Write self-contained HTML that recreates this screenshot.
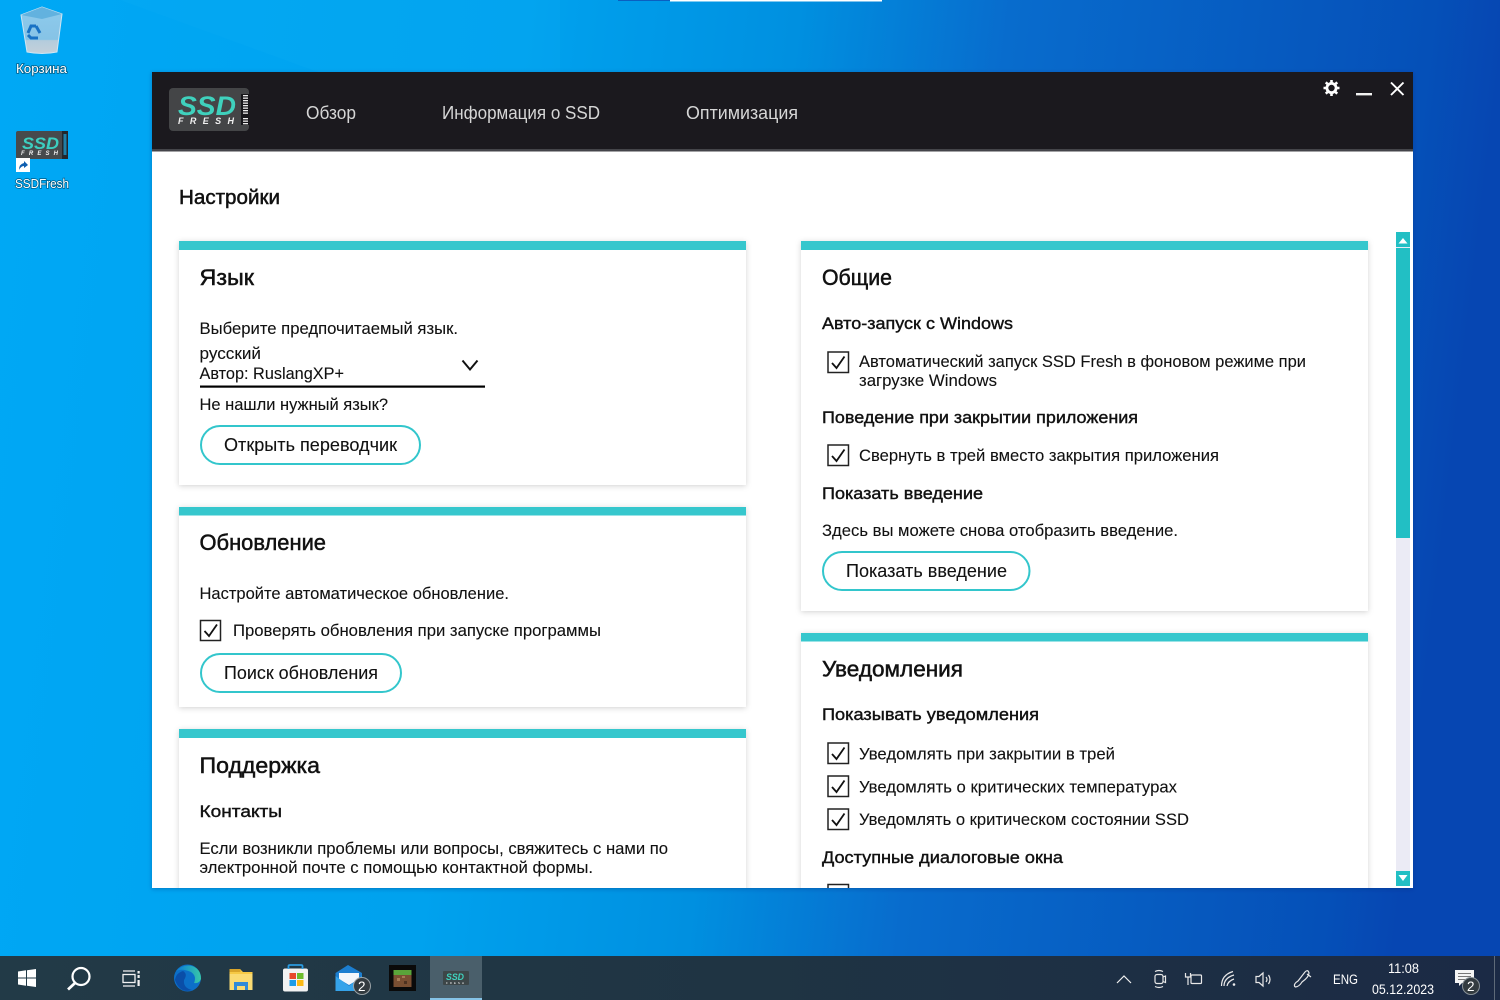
<!DOCTYPE html>
<html lang="ru"><head><meta charset="utf-8"><title>SSD Fresh</title>
<style>
html,body{margin:0;padding:0;width:1500px;height:1000px;overflow:hidden;background:#0a7fdc}
svg{position:absolute;left:0;top:0;display:block}
text{font-family:"Liberation Sans",sans-serif;white-space:pre}
.b{fill:#111;font-size:16.5px;stroke:#111;stroke-width:.1px}
.m{fill:#111;font-size:17px;stroke:#111;stroke-width:.4px}
.h{fill:#111;font-size:22px;stroke:#111;stroke-width:.5px}
.n{fill:#d6d6d6;font-size:18px}
.t{fill:#fff;font-size:13.5px}
.d{fill:#fff;font-size:13px;paint-order:stroke;stroke:rgba(0,0,0,.45);stroke-width:1.5px}
</style></head>
<body>
<svg width="1500" height="1000" viewBox="0 0 1500 1000">
<defs>
<linearGradient id="bg" x1="0" y1="0" x2="1" y2="0.08">
<stop offset="0" stop-color="#00a8f5"/><stop offset=".35" stop-color="#00a2ee"/><stop offset=".53" stop-color="#0090e0"/><stop offset=".67" stop-color="#086ccd"/><stop offset=".95" stop-color="#0550b8"/><stop offset="1" stop-color="#0646b2"/>
</linearGradient>
<linearGradient id="tb" x1="0" x2="1"><stop offset="0" stop-color="#223a47"/><stop offset=".5" stop-color="#1f3443"/><stop offset="1" stop-color="#1b2a45"/></linearGradient>
<linearGradient id="bin" x1="0" y1="0" x2="0" y2="1"><stop offset="0" stop-color="#8ecbec"/><stop offset=".7" stop-color="#86c3e6"/><stop offset=".72" stop-color="#b4ccdc"/><stop offset="1" stop-color="#c4d0da"/></linearGradient>
<linearGradient id="edge" x1="0" x2="1"><stop offset="0" stop-color="#0a7bd8"/><stop offset="1" stop-color="#38c8a8"/></linearGradient>
<filter id="sh" x="-5%" y="-5%" width="110%" height="110%"><feDropShadow dx="0" dy="1" stdDeviation="3" flood-color="#000" flood-opacity=".18"/></filter>
<filter id="wsh" x="-3%" y="-3%" width="106%" height="106%"><feDropShadow dx="0" dy="1" stdDeviation="2" flood-color="#002a70" flood-opacity=".35"/></filter>
<clipPath id="win"><rect x="152" y="72" width="1261" height="816"/></clipPath>
</defs>

<!-- desktop -->
<rect width="1500" height="1000" fill="url(#bg)"/>
<polygon points="120,0 560,0 560,160" fill="#18b4fa" opacity=".12"/>
<rect x="670" y="0" width="212" height="1.5" fill="#fff"/>
<rect x="618" y="0" width="52" height="1" fill="#0a5fc0"/>

<!-- recycle bin -->
<path d="M21 15 L42 7 L62 14 L57 52 Q42 55 27 52 Z" fill="url(#bin)" stroke="#cfe6f4" stroke-width="1"/>
<path d="M21 15 L42 19 L62 14 L42 7 Z" fill="#5aaedd" opacity=".85"/>
<g fill="none" stroke="#1872c4" stroke-width="3">
<path d="M28 33 L31 26 L36 26"/><path d="M36 26 L40 33"/><path d="M38 38 L31 38 L28 35"/>
</g>
<text class="d" x="16" y="73" textLength="51" lengthAdjust="spacingAndGlyphs">Корзина</text>

<!-- desktop ssd icon -->
<rect x="16" y="131" width="52" height="28" rx="2" fill="#474a4c"/>
<rect x="62" y="131" width="6" height="28" fill="#23262a"/>
<rect x="63.5" y="134" width="3" height="21" fill="#1f7fa8"/>
<text x="22" y="149" font-size="17" font-weight="bold" font-style="italic" fill="#3ccfc0" textLength="37" lengthAdjust="spacingAndGlyphs">SSD</text>
<text x="21" y="155" font-size="6" font-weight="bold" font-style="italic" fill="#eee" textLength="37" lengthAdjust="spacing">FRESH</text>
<rect x="16" y="158" width="14" height="14" fill="#fff"/>
<path d="M19 170 Q19 164 24 163 L24 161 L28 165 L24 168 L24 166 Q21 166 19 170Z" fill="#0f5fb0"/>
<text class="d" x="15" y="188" textLength="54" lengthAdjust="spacingAndGlyphs">SSDFresh</text>

<!-- window -->
<rect x="152" y="72" width="1261" height="816" fill="#fff" filter="url(#wsh)"/>
<rect x="152" y="72" width="1261" height="77" fill="#1b191e"/>
<rect x="152" y="149" width="1261" height="2.5" fill="#45454a"/>

<!-- logo -->
<rect x="169" y="88" width="80" height="43" rx="4" fill="#444547"/>
<rect x="241" y="94" width="8" height="31" fill="#17161a"/>
<g fill="#ececec"><rect x="243" y="95" width="5" height="1.3"/><rect x="243" y="97.5" width="5" height="1.3"/><rect x="243" y="100" width="5" height="1.3"/><rect x="243" y="102.5" width="5" height="1.3"/><rect x="243" y="105" width="5" height="1.3"/><rect x="243" y="107.500" width="5" height="1.3"/><rect x="243" y="110" width="5" height="1.3"/><rect x="243" y="112.5" width="5" height="1.3"/><rect x="243" y="118" width="5" height="1.3"/><rect x="243" y="120.500" width="5" height="1.3"/><rect x="243" y="123" width="5" height="1.3"/></g>
<text x="178" y="115" font-size="27" font-weight="bold" font-style="italic" fill="#3fd1bd" textLength="58" lengthAdjust="spacingAndGlyphs">SSD</text>
<text x="178" y="124" font-size="9" font-weight="bold" font-style="italic" fill="#f0f0f0" textLength="56" lengthAdjust="spacing">FRESH</text>

<!-- nav -->
<text class="n" x="306" y="119" textLength="50" lengthAdjust="spacingAndGlyphs">Обзор</text>
<text class="n" x="442" y="119" textLength="158" lengthAdjust="spacingAndGlyphs">Информация о SSD</text>
<text class="n" x="686" y="119" textLength="112" lengthAdjust="spacingAndGlyphs">Оптимизация</text>

<!-- window controls -->
<g transform="translate(1331.500,88)" fill="none" stroke="#fff">
<circle r="4.6" stroke-width="2.8"/>
<g stroke-width="2.6"><path d="M0-8V-5.500M0 5.500V8M-8 0H-5.500M5.500 0H8M-5.700-5.700L-4-4M4 4L5.700 5.700M-5.700 5.700L-4 4M4-4L5.700-5.700"/></g>
</g>
<rect x="1356" y="93" width="16" height="2.4" fill="#f2f2f2"/>
<path d="M1391 82.500L1403.500 95M1403.500 82.500L1391 95" stroke="#fff" stroke-width="1.900" fill="none"/>

<text class="h" x="179" y="204" style="font-size:20px" textLength="101" lengthAdjust="spacingAndGlyphs">Настройки</text>

<g clip-path="url(#win)">
<!-- cards -->
<rect x="179" y="241" width="567" height="244" fill="#fff" filter="url(#sh)"/>
<rect x="179" y="507" width="567" height="200" fill="#fff" filter="url(#sh)"/>
<rect x="179" y="729" width="567" height="260" fill="#fff" filter="url(#sh)"/>
<rect x="801" y="241" width="567" height="370" fill="#fff" filter="url(#sh)"/>
<rect x="801" y="633" width="567" height="360" fill="#fff" filter="url(#sh)"/>
<g fill="#36c7cd">
<rect x="179" y="241" width="567" height="9"/>
<rect x="179" y="507" width="567" height="8.500"/>
<rect x="179" y="729" width="567" height="9"/>
<rect x="801" y="241" width="567" height="9"/>
<rect x="801" y="633" width="567" height="8.500"/>
</g>

<!-- Язык -->
<text class="h" x="199.500" y="285" textLength="54.500" lengthAdjust="spacingAndGlyphs">Язык</text>
<text class="b" x="199.500" y="334" textLength="258.500" lengthAdjust="spacingAndGlyphs">Выберите предпочитаемый язык.</text>
<text class="b" x="199.500" y="359" textLength="61.500" lengthAdjust="spacingAndGlyphs">русский</text>
<text class="b" x="199.500" y="379" textLength="144.500" lengthAdjust="spacingAndGlyphs">Автор: RuslangXP+</text>
<path d="M462.500 360.500L470 369.500L477.500 360.500" fill="none" stroke="#111" stroke-width="2"/>
<rect x="200" y="385.500" width="285" height="2.200" fill="#000"/>
<text class="b" x="199.500" y="410" textLength="188.500" lengthAdjust="spacingAndGlyphs">Не нашли нужный язык?</text>
<rect x="201" y="426" width="219" height="38" rx="19" fill="#fff" stroke="#33c6cc" stroke-width="2"/>
<text class="b" x="224" y="451" style="font-size:18px" textLength="173" lengthAdjust="spacingAndGlyphs">Открыть переводчик</text>

<!-- Обновление -->
<text class="h" x="199.500" y="550" textLength="126.500" lengthAdjust="spacingAndGlyphs">Обновление</text>
<text class="b" x="199.500" y="599" textLength="309.500" lengthAdjust="spacingAndGlyphs">Настройте автоматическое обновление.</text>
<rect x="200.500" y="620.500" width="20" height="20" fill="#fff" stroke="#222" stroke-width="1.500"/>
<path d="M204.500 631L209 636L217 624.500" fill="none" stroke="#111" stroke-width="1.800"/>
<text class="b" x="233" y="636" textLength="368" lengthAdjust="spacingAndGlyphs">Проверять обновления при запуске программы</text>
<rect x="201" y="654" width="200" height="38" rx="19" fill="#fff" stroke="#33c6cc" stroke-width="2"/>
<text class="b" x="224" y="679" style="font-size:18px" textLength="154" lengthAdjust="spacingAndGlyphs">Поиск обновления</text>

<!-- Поддержка -->
<text class="h" x="199.500" y="773" textLength="120.500" lengthAdjust="spacingAndGlyphs">Поддержка</text>
<text class="m" x="199.500" y="817" textLength="82.500" lengthAdjust="spacingAndGlyphs">Контакты</text>
<text class="b" x="199.500" y="854" textLength="468.500" lengthAdjust="spacingAndGlyphs">Если возникли проблемы или вопросы, свяжитесь с нами по</text>
<text class="b" x="199.500" y="873" textLength="393.500" lengthAdjust="spacingAndGlyphs">электронной почте с помощью контактной формы.</text>

<!-- Общие -->
<text class="h" x="822" y="285" textLength="70" lengthAdjust="spacingAndGlyphs">Общие</text>
<text class="m" x="822" y="329" textLength="191" lengthAdjust="spacingAndGlyphs">Авто-запуск с Windows</text>
<rect x="828" y="352" width="20.500" height="20.500" fill="#fff" stroke="#222" stroke-width="1.500"/>
<path d="M832 363L836.500 368L844.500 356.500" fill="none" stroke="#111" stroke-width="1.800"/>
<text class="b" x="859" y="367" textLength="447" lengthAdjust="spacingAndGlyphs">Автоматический запуск SSD Fresh в фоновом режиме при</text>
<text class="b" x="859" y="386" textLength="138" lengthAdjust="spacingAndGlyphs">загрузке Windows</text>
<text class="m" x="822" y="423" textLength="316" lengthAdjust="spacingAndGlyphs">Поведение при закрытии приложения</text>
<rect x="828" y="445" width="20.500" height="20.500" fill="#fff" stroke="#222" stroke-width="1.500"/>
<path d="M832 456L836.500 461L844.500 449.500" fill="none" stroke="#111" stroke-width="1.800"/>
<text class="b" x="859" y="461" textLength="360" lengthAdjust="spacingAndGlyphs">Свернуть в трей вместо закрытия приложения</text>
<text class="m" x="822" y="499" textLength="161" lengthAdjust="spacingAndGlyphs">Показать введение</text>
<text class="b" x="822" y="536" textLength="356" lengthAdjust="spacingAndGlyphs">Здесь вы можете снова отобразить введение.</text>
<rect x="823" y="552" width="206.500" height="38" rx="19" fill="#fff" stroke="#33c6cc" stroke-width="2"/>
<text class="b" x="846" y="577" style="font-size:18px" textLength="161" lengthAdjust="spacingAndGlyphs">Показать введение</text>

<!-- Уведомления -->
<text class="h" x="822" y="676.500" textLength="141" lengthAdjust="spacingAndGlyphs">Уведомления</text>
<text class="m" x="822" y="720" textLength="217" lengthAdjust="spacingAndGlyphs">Показывать уведомления</text>
<rect x="828" y="743" width="20.500" height="20.500" fill="#fff" stroke="#222" stroke-width="1.500"/>
<path d="M832 754L836.500 759L844.500 747.500" fill="none" stroke="#111" stroke-width="1.800"/>
<text class="b" x="859" y="759.500" textLength="256" lengthAdjust="spacingAndGlyphs">Уведомлять при закрытии в трей</text>
<rect x="828" y="776" width="20.500" height="20.500" fill="#fff" stroke="#222" stroke-width="1.500"/>
<path d="M832 787L836.500 792L844.500 780.500" fill="none" stroke="#111" stroke-width="1.800"/>
<text class="b" x="859" y="792.500" textLength="318" lengthAdjust="spacingAndGlyphs">Уведомлять о критических температурах</text>
<rect x="828" y="809" width="20.500" height="20.500" fill="#fff" stroke="#222" stroke-width="1.500"/>
<path d="M832 820L836.500 825L844.500 813.500" fill="none" stroke="#111" stroke-width="1.800"/>
<text class="b" x="859" y="825" textLength="330" lengthAdjust="spacingAndGlyphs">Уведомлять о критическом состоянии SSD</text>
<text class="m" x="822" y="863" textLength="241" lengthAdjust="spacingAndGlyphs">Доступные диалоговые окна</text>
<rect x="828" y="884.500" width="20.500" height="20.500" fill="#fff" stroke="#222" stroke-width="1.500"/>
</g>

<!-- scrollbar -->
<rect x="1396" y="232" width="14" height="654" fill="#ebebf5"/>
<rect x="1396" y="232" width="14" height="15" fill="#22bfc4"/>
<path d="M1398.500 243.500L1403 238L1407.500 243.500Z" fill="#fff"/>
<rect x="1396" y="248" width="14" height="290" fill="#22bfc4"/>
<rect x="1396" y="871" width="14" height="15" fill="#22bfc4"/>
<path d="M1398.500 875L1403 881L1407.500 875Z" fill="#fff"/>

<!-- taskbar -->
<rect x="0" y="956" width="1500" height="44" fill="url(#tb)"/>
<path d="M18 971.500L26 970.300V977.500H18ZM27 970.200L36 969V977.500H27ZM18 978.500H26V985.700L18 984.500ZM27 978.500H36V987L27 985.800Z" fill="#fff"/>
<circle cx="81" cy="976.500" r="8.500" fill="none" stroke="#fff" stroke-width="2.200"/>
<path d="M75 983L68 989.500" stroke="#fff" stroke-width="2.800" fill="none"/>
<g fill="none" stroke="#f2f2f2" stroke-width="1.300">
<path d="M123 971H135M123 986H135"/><rect x="123" y="974.500" width="12" height="8"/>
</g>
<g fill="#f2f2f2"><rect x="137.500" y="971" width="2.200" height="2.500"/><rect x="137.500" y="975" width="2.200" height="3"/><rect x="137.500" y="980" width="2.200" height="6"/></g>
<!-- edge -->
<circle cx="187.500" cy="978" r="13.500" fill="#0c6fc8"/>
<path d="M176 971Q183 964 192 966Q201 969 201 979Q199 984 194 983Q197 976 191 972Q182 968 176 971Z" fill="url(#edge)"/>
<path d="M175 980Q176 973 183 971Q188 974 184 980Q183 988 192 990Q180 994 175 980Z" fill="#0a4ea8"/>
<!-- explorer -->
<path d="M229.500 969H240L243 972H252.500V990H229.500Z" fill="#f6c945"/>
<rect x="229.500" y="969" width="11" height="3" fill="#d9a52a"/>
<path d="M229.500 974H252.500V990H229.500Z" fill="#fadb73"/>
<path d="M234 982H248V990H245V986H237V990H234Z" fill="#2f8ad8"/>
<!-- store -->
<rect x="283" y="968.500" width="25" height="23" rx="2" fill="#f2f2f2"/>
<path d="M288.500 969V966Q288.500 965 290 965H301Q302.500 965 302.500 966V969" fill="none" stroke="#2b9be0" stroke-width="1.800"/>
<rect x="289.500" y="973" width="6.500" height="6" fill="#e8492a"/><rect x="297" y="973" width="6.500" height="6" fill="#6cbb2c"/>
<rect x="289.500" y="980" width="6.500" height="6" fill="#1a9be8"/><rect x="297" y="980" width="6.500" height="6" fill="#fab915"/>
<!-- mail -->
<path d="M335.500 973L348 965L362 973V991H335.500Z" fill="#1c7ed0"/>
<path d="M339 973H359V979L349 985L339 979Z" fill="#f2f6fb"/>
<path d="M335.500 976L349 986L362 976V991H335.500Z" fill="#35a3ea"/>
<circle cx="362" cy="986" r="8.500" fill="#333b40" stroke="#9aa2a6" stroke-width="1"/>
<text x="358" y="991" fill="#fff" font-size="13.500">2</text>
<!-- minecraft -->
<rect x="389" y="965" width="27" height="26" fill="#0a0a0a"/>
<rect x="393.500" y="970" width="18" height="17" fill="#7a4f32"/>
<rect x="393.500" y="970" width="18" height="5" fill="#5aa53a"/>
<rect x="397" y="978" width="3" height="3" fill="#a67a55"/><rect x="404" y="981" width="3" height="3" fill="#4e3220"/><rect x="402" y="976" width="3" height="2" fill="#a67a55"/>
<!-- active -->
<rect x="430" y="956" width="52" height="44" fill="#4a5f6b"/>
<rect x="430" y="998" width="52" height="2" fill="#86c4e8"/>
<rect x="443" y="971" width="26" height="14" rx="1" fill="#3d4648"/>
<text x="446" y="980" font-size="9" font-weight="bold" font-style="italic" fill="#3fd1bd" textLength="18" lengthAdjust="spacingAndGlyphs">SSD</text>
<text x="446" y="984" font-size="3" fill="#eee" textLength="18" lengthAdjust="spacing">FRESH</text>

<!-- tray -->
<path d="M1117 983L1124 976L1131 983" fill="none" stroke="#f0f0f0" stroke-width="1.200"/>
<g fill="none" stroke="#e8e8e8" stroke-width="1.200">
<rect x="1155" y="974.500" width="8" height="9" rx="2"/><path d="M1163 977L1165.500 976V982.500L1163 981.500"/><path d="M1155 971.500Q1159 969.500 1163 971.500M1155 986.500Q1159 988.500 1163 986.500"/>
<path d="M1188 980V985M1185.500 973V977H1190.500V973M1188 977V980"/><rect x="1191" y="975" width="10.500" height="8.500" rx="1"/>
<path d="M1224 986Q1224 978 1234 975M1227 986Q1228 981 1234 979M1221.500 986Q1221.500 975 1233 971.500"/>
<path d="M1256 976.500H1259L1263 973V986L1259 982.500H1256ZM1266 977Q1268 979.500 1266 982M1268.500 975Q1271.500 979.500 1268.500 984"/>
<path d="M1295 987Q1293 984 1298 981L1305 972Q1308 969 1309 973Q1309 977 1302 982Q1299 987 1295 987M1307 974L1311 977"/>
</g>
<circle cx="1234" cy="984.500" r="1.300" fill="#eee"/>
<text class="t" x="1333" y="984" textLength="25" lengthAdjust="spacingAndGlyphs">ENG</text>
<text class="t" x="1388" y="973" textLength="31" lengthAdjust="spacingAndGlyphs">11:08</text>
<text class="t" x="1372" y="994" textLength="62" lengthAdjust="spacingAndGlyphs">05.12.2023</text>
<path d="M1455 970H1474V983H1462L1459 986V983H1455Z" fill="#f4f4f4"/>
<path d="M1458 973.500H1471M1458 976.500H1471M1458 979.500H1468" stroke="#777" stroke-width="1"/>
<circle cx="1471" cy="986" r="8.500" fill="#333b40" stroke="#8a9298" stroke-width="1"/>
<text x="1467" y="991" fill="#fff" font-size="13.500">2</text>
<rect x="1494" y="956" width="1" height="44" fill="#5e6a78"/>
</svg>
</body></html>
